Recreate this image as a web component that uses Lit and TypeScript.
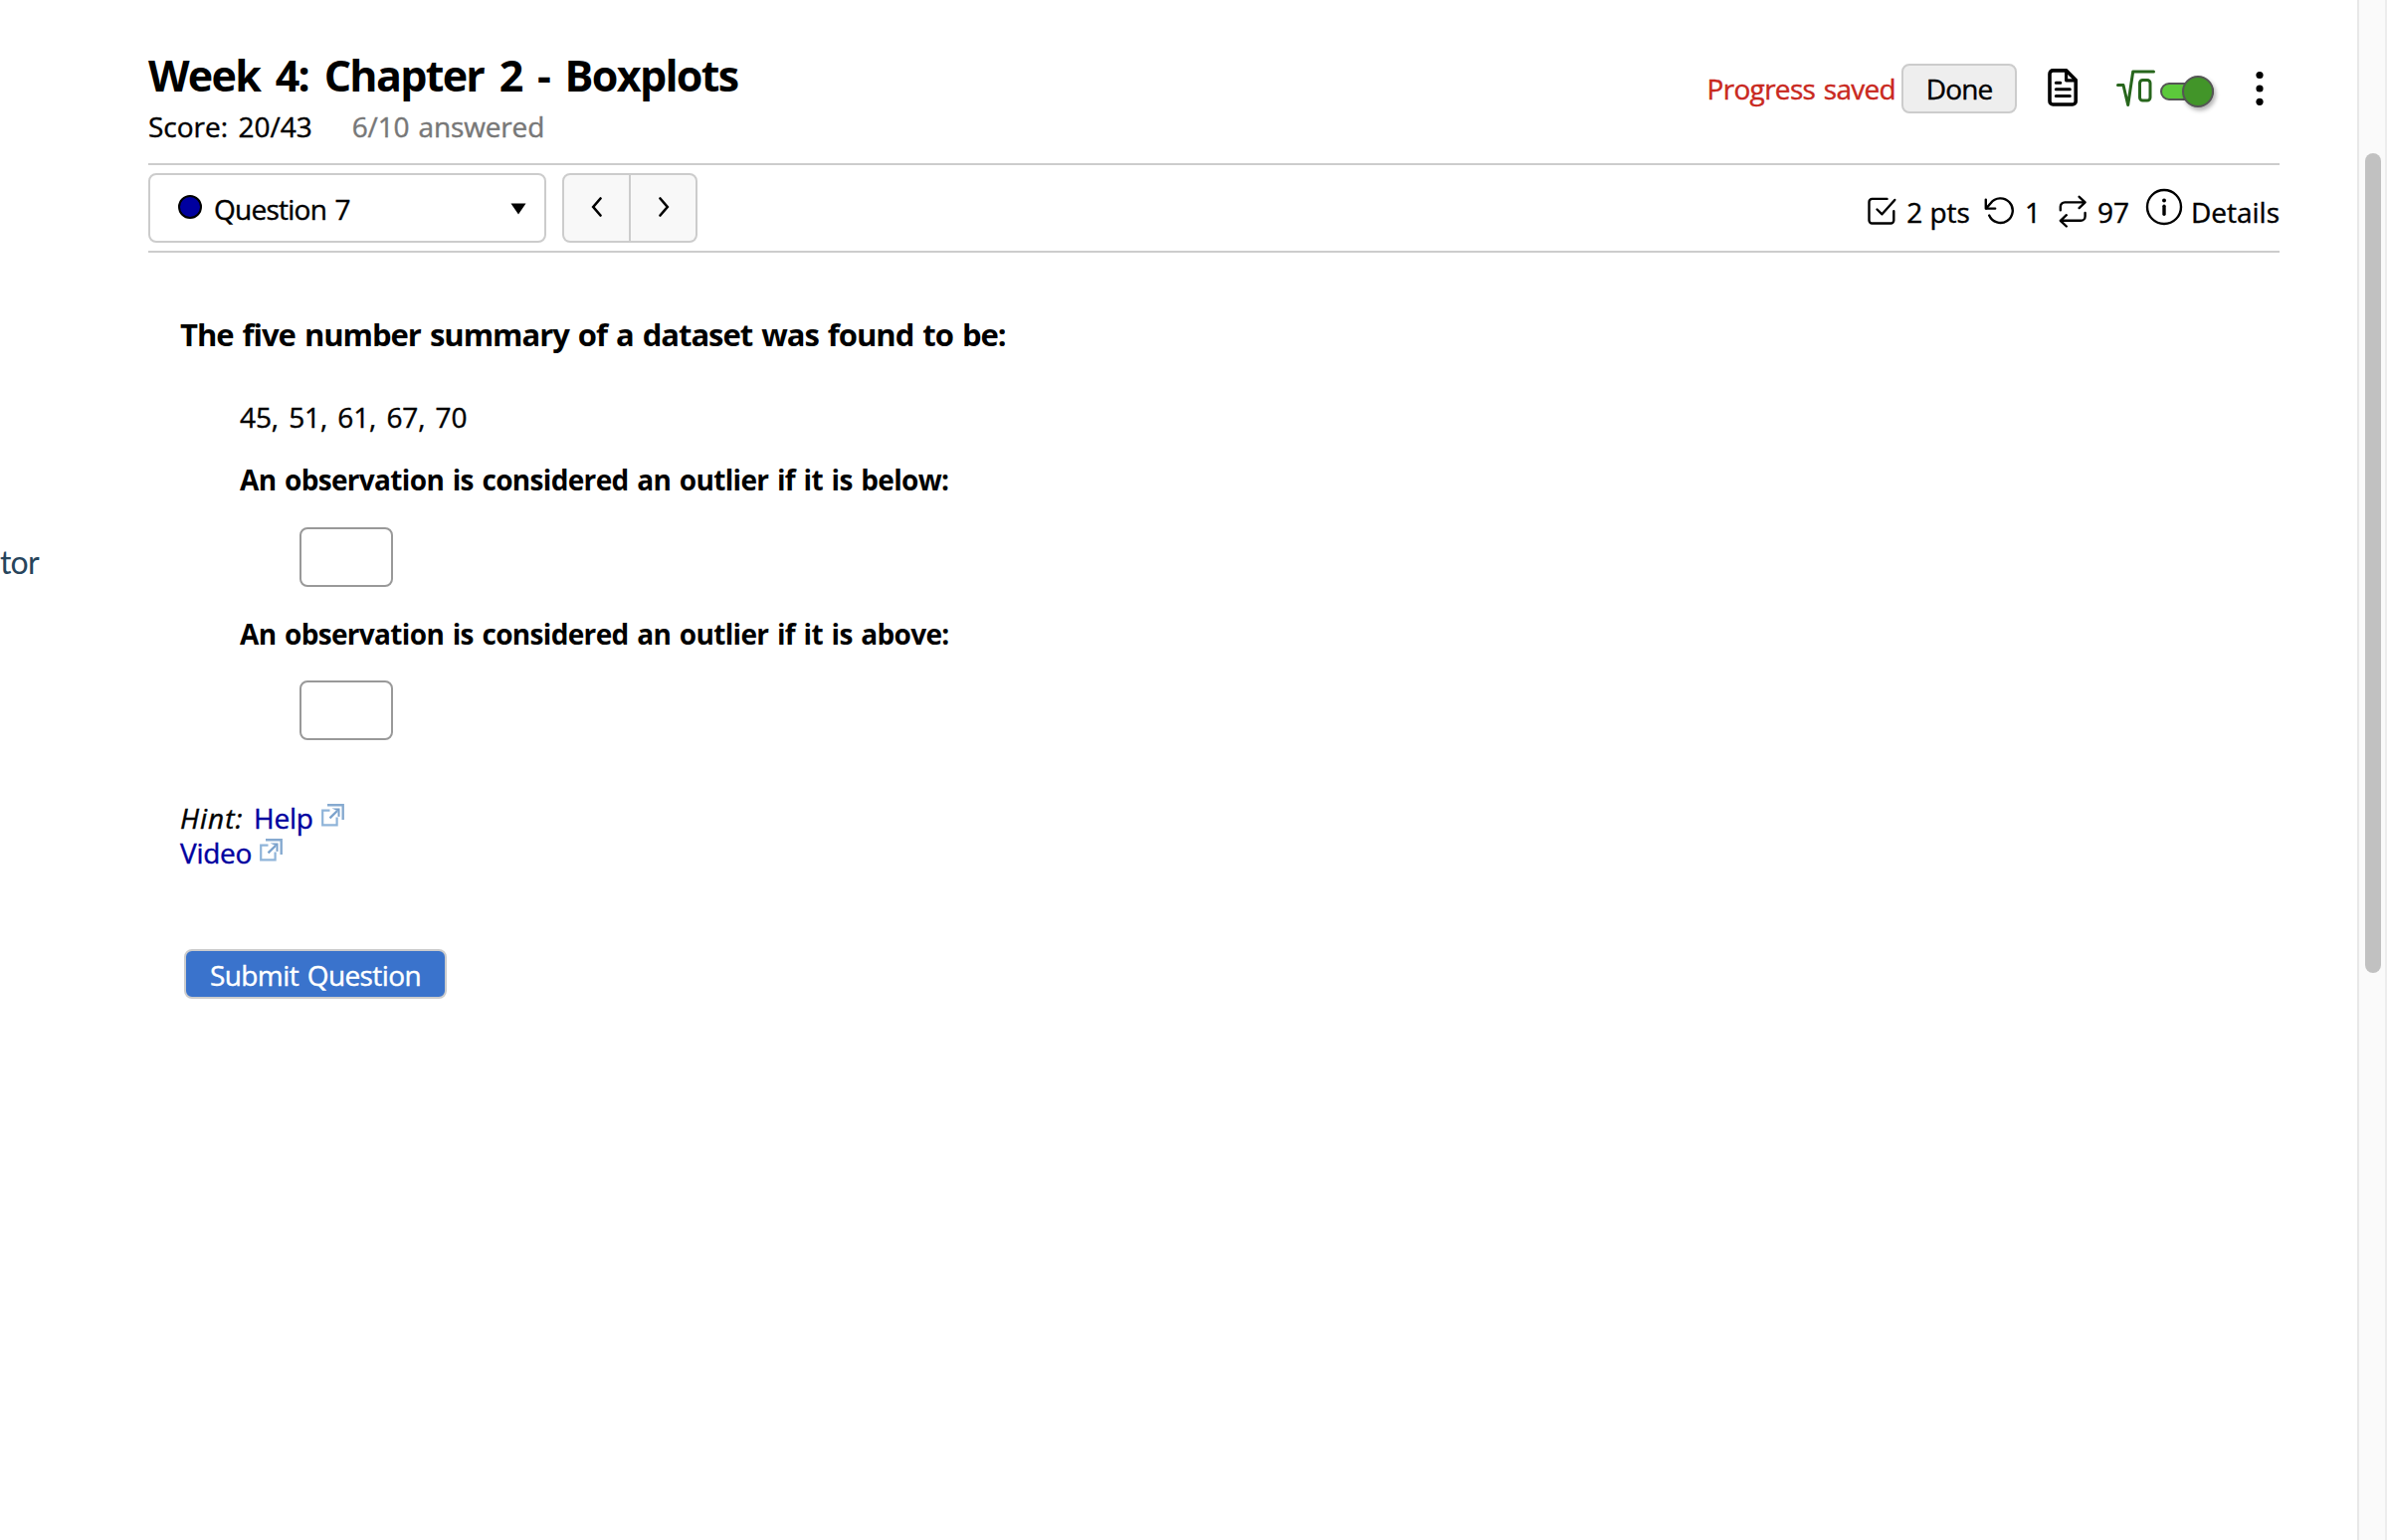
import { css, html, LitElement, svg } from "lit";
import { customElement, property } from "lit/decorators.js";

const icons = {
    prev: svg`<path d="M9.5 1.5 2.2 10l7.3 8.5" />`,
    next: svg`<path d="M2.5 1.5 9.8 10l-7.3 8.5" />`,
};

@customElement("ext-icon")
class ExtIcon extends LitElement {
    render() {
        return html`
            <svg width="23" height="23" viewBox="0 0 23 23" fill="none">
                <path d="M6 1.3H21.7V16" stroke="#86aad0" stroke-width="2.4" />
                <path d="M8.5 6.6H1.2V21.3H15.6V13.5" stroke="#8fb4d9" stroke-width="2.2" />
                <path d="M8.5 14.3 16 7" stroke="#7ba2cc" stroke-width="2.4" />
                <path d="M10.5 4.5h8v8.5l-2-.2V7.2z" fill="#7ba2cc" />
            </svg>
        `;
    }

    static styles = css`
        :host {
            display: block;
            width: 23px;
            height: 23px;
        }
        svg {
            display: block;
        }
    `;
}

@customElement("quiz-header")
class QuizHeader extends LitElement {
    @property() heading = "";
    @property() score = "";
    @property() answered = "";

    render() {
        return html`
            <div class="titles">
                <h1>${this.heading}</h1>
                <div class="sub">
                    <span class="score">Score: ${this.score}</span>
                    <span class="answered">${this.answered} answered</span>
                </div>
            </div>
            <div class="tools">
                <span class="saved">Progress saved</span>
                <button>Done</button>
                <svg class="doc" width="30" height="38" viewBox="0 0 30 38" fill="none" stroke="#000" stroke-linecap="round" stroke-linejoin="round">
                    <path d="M5.3 1.9H18.8L28.2 11.5V32.7a3.3 3.3 0 0 1-3.3 3.3H5.3A3.3 3.3 0 0 1 2 32.7V5.2A3.3 3.3 0 0 1 5.3 1.9z" stroke-width="3.6" />
                    <path d="M18.6 2v9.8H28" stroke-width="3.2" />
                    <path d="M8.3 14.2h4.5M8.3 20.8h14M8.3 27.6h14" stroke-width="3" />
                </svg>
                <svg class="sqrt" width="39" height="38" viewBox="0 0 39 38" fill="none" stroke="#27661c" stroke-width="3" stroke-linecap="round" stroke-linejoin="round">
                    <path d="M1.5 15.5h5.5l4.7 20 5-33.5h20.8" />
                    <rect x="23.5" y="10.5" width="10.5" height="20.5" rx="3" />
                </svg>
                <div class="switch"><div class="knob"></div></div>
                <svg class="dots" width="8" height="36" viewBox="0 0 8 36">
                    <circle cx="4" cy="4.5" r="3.6" />
                    <circle cx="4" cy="18" r="3.6" />
                    <circle cx="4" cy="31.3" r="3.6" />
                </svg>
            </div>
        `;
    }

    static styles = css`
        :host {
            display: flex;
            justify-content: space-between;
            height: 164px;
            border-bottom: 2px solid #ccc;
        }
        .titles {
            padding-top: 52px;
        }
        h1 {
            margin: 0 0 9px;
            font-size: 43px;
            line-height: 48px;
            font-weight: 700;
            word-spacing: 6px;
            letter-spacing: -1.7px;
            -webkit-text-stroke: 0;
        }
        .sub {
            display: flex;
            gap: 40px;
            line-height: 36px;
        }
        .score {
            word-spacing: 3px;
        }
        .answered {
            color: #777;
            word-spacing: 2px;
            letter-spacing: -0.15px;
        }
        .tools {
            display: flex;
            align-items: center;
            height: 50px;
            padding-top: 64px;
            padding-right: 16px;
        }
        .saved {
            color: #c9281e;
            margin-right: 6px;
            word-spacing: 2px;
            letter-spacing: -0.7px;
        }
        button {
            box-sizing: border-box;
            width: 116px;
            height: 50px;
            padding: 0;
            border: 2px solid #ccc;
            border-radius: 8px;
            background: #eee;
            color: #000;
            font: inherit;
            letter-spacing: -0.9px;
        }
        .doc {
            margin: -2px 0 0 31px;
        }
        .sqrt {
            margin: -1px 0 0 39px;
        }
        .switch {
            box-sizing: border-box;
            width: 54px;
            height: 18px;
            margin: 5px 0 0 5px;
            border: 2px solid #555;
            border-radius: 9px;
            background: #5cc93b;
            display: flex;
            align-items: center;
            justify-content: flex-end;
        }
        .knob {
            box-sizing: border-box;
            flex: none;
            width: 32px;
            height: 32px;
            margin: 0 -2px 0 0;
            border: 2px solid #555;
            border-radius: 50%;
            background: #429529;
            box-shadow: 2px 3px 4px rgba(0, 0, 0, 0.3);
        }
        .dots {
            margin: -1px 0 0 42px;
        }
    `;
}

@customElement("quiz-toolbar")
class QuizToolbar extends LitElement {
    @property({ type: Number }) question = 1;

    render() {
        return html`
            <div class="select">
                <i class="status"></i>
                <span class="q">Question ${this.question}</span>
                <svg width="16" height="12" viewBox="0 0 16 12"><path d="M.5.5h15L8 11.5z" /></svg>
            </div>
            <div class="pager">
                <button aria-label="Previous"><svg width="12" height="20" class="chev">${icons.prev}</svg></button>
                <button aria-label="Next"><svg width="12" height="20" class="chev">${icons.next}</svg></button>
            </div>
            <div class="info">
                <svg class="check" width="29" height="28" viewBox="0 0 29 28">
                    <path d="M19.5 1.9H4.5a3 3 0 0 0-3 3V23.5a3 3 0 0 0 3 3H23.3a3 3 0 0 0 3-3V14.3" />
                    <path d="m9.5 12.5 5 4.8L27.3 3" />
                </svg>
                <span>2 pts</span>
                <svg class="undo" width="31" height="28" viewBox="0 0 31 28">
                    <path d="M1.8 2.6v9h9.4" />
                    <path d="M2.2 11.4 6.7 6.2A12.3 12.3 0 1 1 5.2 18.6" />
                </svg>
                <span>1</span>
                <svg class="repeat" width="29" height="33" viewBox="0 0 29 33">
                    <path d="m20.6 1.8 6 5.6-6 5.7M26.4 7.4H6.2A4.4 4.4 0 0 0 1.8 11.8v3.5" />
                    <path d="m7.8 20.2-6 5.6 6 5.7M2 25.8H22.2a4.4 4.4 0 0 0 4.4-4.4V18" />
                </svg>
                <span>97</span>
                <svg class="about" width="38" height="38" viewBox="0 0 38 38">
                    <circle cx="19" cy="19" r="17" />
                    <path d="M19 18.2v8" stroke-width="3.4" />
                    <path d="M19 12.4v.1" stroke-width="4" />
                </svg>
                <span>Details</span>
            </div>
        `;
    }

    static styles = css`
        :host {
            display: flex;
            align-items: flex-start;
            height: 78px;
            padding-top: 8px;
            border-bottom: 2px solid #ccc;
        }
        .select {
            box-sizing: border-box;
            width: 400px;
            height: 70px;
            padding: 0 18px 0 28px;
            border: 2px solid #ccc;
            border-radius: 8px;
            display: flex;
            align-items: center;
        }
        .status {
            box-sizing: border-box;
            width: 24px;
            height: 24px;
            margin: -2px 12px 0 0;
            border: 2px solid #000;
            border-radius: 50%;
            background: #00009f;
        }
        .q {
            margin-top: 1px;
            word-spacing: 2px;
            letter-spacing: -0.75px;
        }
        .select svg {
            margin: 2px 0 0 auto;
        }
        .pager {
            display: flex;
            gap: 2px;
            box-sizing: border-box;
            width: 136px;
            height: 70px;
            margin-left: 16px;
            border: 2px solid #ccc;
            border-radius: 8px;
            background: #ccc;
            overflow: hidden;
        }
        button {
            flex: 1;
            display: flex;
            align-items: center;
            justify-content: center;
            padding: 0 0 2px;
            border: 0;
            background: #f8f8f8;
        }
        .chev {
            fill: none;
            stroke: #000;
            stroke-width: 2.6;
            stroke-linecap: round;
        }
        .info {
            display: flex;
            align-items: center;
            height: 78px;
            margin-left: auto;
        }
        .info svg {
            flex: none;
            fill: none;
            stroke: #000;
            stroke-width: 2.4;
            stroke-linecap: round;
            stroke-linejoin: round;
        }
        .info .check {
            margin: -2px 10px 0 0;
        }
        .info .undo {
            margin: -2px 10px 0 14px;
        }
        .repeat {
            margin: -2px 10px 0 18px;
        }
        .about {
            margin: -10px 8px 0 16px;
        }
    `;
}

@customElement("app-root")
class AppRoot extends LitElement {
    render() {
        return html`
            <aside>tor</aside>
            <main>
                <quiz-header heading="Week 4: Chapter 2 - Boxplots" score="20/43" answered="6/10"></quiz-header>
                <quiz-toolbar question="7"></quiz-toolbar>
                <section>
                    <h2>The five number summary of a dataset was found to be:</h2>
                    <div class="parts">
                        <p class="data">45, 51, 61, 67, 70</p>
                        <p class="ask">An observation is considered an outlier if it is below:</p>
                        <input type="text" />
                        <p class="ask above">An observation is considered an outlier if it is above:</p>
                        <input type="text" />
                    </div>
                    <div class="help">
                        <div><em>Hint:</em><a>Help</a><ext-icon></ext-icon></div>
                        <div><a class="video">Video</a><ext-icon></ext-icon></div>
                    </div>
                    <button>Submit Question</button>
                </section>
            </main>
            <div class="scroll"><div class="thumb"></div></div>
        `;
    }

    static styles = css`
        :host {
            display: flex;
            width: 2399px;
            height: 1548px;
            overflow: hidden;
            background: #fff;
            color: #000;
            font-family: "Open Sans", "Noto Sans", sans-serif;
            font-size: 28px;
            line-height: 36px;
            -webkit-text-stroke: 0.4px;
        }
        aside {
            width: 149px;
            padding-top: 545px;
            box-sizing: border-box;
            color: #27455c;
            font-family: Lato, sans-serif;
            font-size: 32px;
            line-height: 40px;
            letter-spacing: -0.8px;
            -webkit-text-stroke: 0;
        }
        main {
            width: 2142px;
        }
        section {
            padding: 62px 0 0 32px;
        }
        h2 {
            margin: 0;
            font-size: 31px;
            line-height: 40px;
            font-weight: 700;
            word-spacing: 2px;
            letter-spacing: -1.03px;
            -webkit-text-stroke: 0;
        }
        .parts {
            padding: 45px 0 0 60px;
        }
        p {
            margin: 0;
        }
        .data {
            word-spacing: 3px;
            letter-spacing: -0.1px;
        }
        .ask {
            margin: 27px 0 30px;
            font-weight: 700;
            word-spacing: 2px;
            letter-spacing: -0.67px;
            -webkit-text-stroke: 0;
        }
        .above {
            margin: 29px 0;
        }
        input {
            box-sizing: border-box;
            display: block;
            width: 94px;
            height: 60px;
            margin: 0 0 0 60px;
            border: 2px solid #999;
            border-radius: 8px;
            background: #fff;
        }
        .help {
            padding-top: 61px;
        }
        .help div {
            display: flex;
            height: 35px;
            line-height: 35px;
        }
        .help em {
            width: 74px;
            letter-spacing: 1px;
        }
        .help a {
            color: #00009f;
            letter-spacing: -0.2px;
        }
        .help .video {
            letter-spacing: -0.3px;
        }
        ext-icon {
            margin: 3px 0 0 8px;
        }
        section button {
            box-sizing: border-box;
            display: block;
            width: 264px;
            height: 50px;
            margin: 79px 0 0 4px;
            padding: 1px 0 0;
            border: 2px solid #ccc;
            border-radius: 8px;
            background: #3a73cc;
            color: #fff;
            font: inherit;
            word-spacing: 2px;
            letter-spacing: -0.6px;
        }
        .scroll {
            box-sizing: border-box;
            width: 30px;
            margin-left: auto;
            padding: 154px 4px 0 6px;
            border-left: 2px solid #e8e8e8;
            border-right: 2px solid #ededed;
            background: #fafafa;
        }
        .thumb {
            width: 16px;
            height: 824px;
            border-radius: 8px;
            background: #c1c1c1;
        }
    `;
}
